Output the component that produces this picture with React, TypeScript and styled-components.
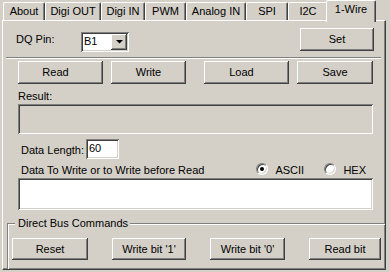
import styled, { createGlobalStyle } from "styled-components";

const GlobalStyle = createGlobalStyle`
  body {
    margin: 0;
    background: #d4d0c8;
    font-family: "Liberation Sans", Arial, sans-serif;
    font-size: 11px;
    line-height: 13px;
    color: #000;
  }
`;

const Window = styled.div`
  box-sizing: border-box;
  width: 390px;
  height: 272px;
  padding-left: 2px;
  background: #d4d0c8;
  overflow: hidden;
`;

const TabStrip = styled.div`
  display: flex;
  align-items: flex-end;
  height: 20px;
  padding-left: 1px;
  position: relative;
  z-index: 1;
`;

const Tab = styled.div<{ $w: number; $active?: boolean }>`
  box-sizing: border-box;
  width: ${(p) => (p.$active ? p.$w + 4 : p.$w)}px;
  height: ${(p) => (p.$active ? 22 : 18)}px;
  margin: ${(p) => (p.$active ? "0 -2px -2px -2px" : "0")};
  padding-top: 2px;
  display: flex;
  justify-content: center;
  background: #d4d0c8;
  border-top: 1px solid #fff;
  border-left: 1px solid #fff;
  border-right: 1px solid #404040;
  border-radius: 2px 2px 0 0;
  box-shadow: inset -1px 0 #808080;
  position: relative;
  z-index: ${(p) => (p.$active ? 2 : 1)};
  white-space: nowrap;
`;

const Panel = styled.div`
  box-sizing: border-box;
  width: 384px;
  height: 250px;
  border-top: 1px solid #fff;
  border-left: 1px solid #fff;
  border-right: 1px solid #404040;
  border-bottom: 1px solid #404040;
  box-shadow: inset -1px -1px #808080;
  display: flex;
  flex-direction: column;
  overflow: hidden;
`;

const Row = styled.div<{ $top: number }>`
  display: flex;
  align-items: flex-start;
  margin-top: ${(p) => p.$top}px;
`;

const Label = styled.span<{ $left: number; $top?: number; $w?: number }>`
  margin-left: ${(p) => p.$left}px;
  margin-top: ${(p) => p.$top ?? 0}px;
  ${(p) => (p.$w ? `width: ${p.$w}px;` : "")}
  white-space: nowrap;
`;

const Button = styled.button<{ $w: number; $h?: number; $left?: number; $shift?: number }>`
  box-sizing: border-box;
  width: ${(p) => p.$w}px;
  height: ${(p) => p.$h ?? 23}px;
  margin-left: ${(p) => p.$left ?? 0}px;
  padding: 0 ${(p) => (p.$shift ?? 0) * 2}px 0 0;
  border: none;
  background: #d4d0c8;
  font: inherit;
  color: #000;
  box-shadow: inset -1px -1px #404040, inset 1px 1px #fff,
    inset -2px -2px #808080;
  flex-shrink: 0;
`;

const SetButton = styled(Button)`
  margin-left: auto;
  margin-right: 11px;
`;

const Select = styled.div`
  box-sizing: border-box;
  width: 48px;
  height: 20px;
  margin-top: 4px;
  padding: 2px;
  display: flex;
  background: #fff;
  box-shadow: inset 1px 1px #808080, inset -1px -1px #fff,
    inset 2px 2px #404040, inset -2px -2px #d4d0c8;
`;

const SelectValue = styled.span`
  flex: 1;
  padding: 1px 0 0 1px;
`;

const DropButton = styled.div`
  box-sizing: border-box;
  width: 16px;
  display: flex;
  align-items: center;
  justify-content: center;
  background: #d4d0c8;
  box-shadow: inset -1px -1px #404040, inset 1px 1px #fff,
    inset -2px -2px #808080;
`;

const Separator = styled.div`
  margin: 5px 0 0 3px;
  width: 375px;
  height: 0;
  border-top: 1px solid #808080;
  border-bottom: 1px solid #fff;
`;

const Field = styled.div<{ $w: number; $h: number; $white?: boolean; $left: number }>`
  box-sizing: border-box;
  width: ${(p) => p.$w}px;
  height: ${(p) => p.$h}px;
  margin-left: ${(p) => p.$left}px;
  padding: 3px 0 0 3px;
  background: ${(p) => (p.$white ? "#fff" : "#d4d0c8")};
  box-shadow: inset 1px 1px #808080, inset -1px -1px #fff,
    inset 2px 2px #404040, inset -2px -2px #d4d0c8;
  flex-shrink: 0;
`;

const Block = styled.div<{ $top: number }>`
  margin-top: ${(p) => p.$top}px;
`;

const RadioGroup = styled.div`
  display: flex;
  margin-left: auto;
  margin-right: 19px;
`;

const RadioItem = styled.label<{ $w?: number }>`
  display: flex;
  align-items: flex-start;
  gap: 7px;
  ${(p) => (p.$w ? `width: ${p.$w}px;` : "")}
`;

const RadioCircle = styled.span<{ $checked?: boolean }>`
  box-sizing: border-box;
  width: 12px;
  height: 12px;
  margin-top: -1px;
  border-radius: 50%;
  background: #fff;
  border-top: 1px solid #808080;
  border-left: 1px solid #808080;
  border-right: 1px solid #fff;
  border-bottom: 1px solid #fff;
  box-shadow: inset 1px 1px #404040, inset -1px -1px #d4d0c8;
  display: flex;
  align-items: center;
  justify-content: center;
  &::after {
    content: "";
    width: 4px;
    height: 4px;
    border-radius: 50%;
    background: ${(p) => (p.$checked ? "#000" : "transparent")};
  }
`;

const Group = styled.div`
  flex: 1;
  margin: 13px -10px -10px 4px;
  padding: 14px 0 0 4px;
  border-top: 1px solid #808080;
  border-left: 1px solid #808080;
  box-shadow: inset 1px 1px #fff;
  position: relative;
  display: flex;
  align-items: flex-start;
  gap: 24px;
`;

const Legend = styled.span`
  position: absolute;
  top: -7px;
  left: 7px;
  padding: 0 2px 0 3px;
  background: #d4d0c8;
  white-space: nowrap;
`;

const tabs = [
  { name: "About", w: 42 },
  { name: "Digi OUT", w: 56 },
  { name: "Digi IN", w: 44 },
  { name: "PWM", w: 41 },
  { name: "Analog IN", w: 60 },
  { name: "SPI", w: 42 },
  { name: "I2C", w: 40 },
  { name: "1-Wire", w: 46, active: true },
];

export default function App() {
  return (
    <>
      <GlobalStyle />
      <Window>
        <TabStrip>
          {tabs.map((t) => (
            <Tab key={t.name} $w={t.w} $active={t.active}>
              {t.name}
            </Tab>
          ))}
        </TabStrip>
        <Panel>
          <Row $top={7}>
            <Label $left={13} $top={5} $w={65}>
              DQ Pin:
            </Label>
            <Select>
              <SelectValue>B1</SelectValue>
              <DropButton>
                <svg width="7" height="4" viewBox="0 0 7 4">
                  <polygon points="0,0 7,0 3.5,3.5" fill="#000" />
                </svg>
              </DropButton>
            </Select>
            <SetButton $w={74}>Set</SetButton>
          </Row>
          <Separator />
          <Row $top={2}>
            <Button $w={85} $left={15} $shift={5}>Read</Button>
            <Button $w={75} $left={8}>Write</Button>
            <Button $w={85} $left={18} $shift={5}>Load</Button>
            <Button $w={76} $left={8}>Save</Button>
          </Row>
          <Block $top={6}>
            <Label $left={15}>Result:</Label>
          </Block>
          <Row $top={1}>
            <Field $w={355} $h={30} $left={15} />
          </Row>
          <Row $top={5}>
            <Label $left={18} $top={5} $w={65}>
              Data Length:
            </Label>
            <Field $w={33} $h={20} $left={0} $white>
              60
            </Field>
          </Row>
          <Row $top={5}>
            <Label $left={18}>Data To Write or to Write before Read</Label>
            <RadioGroup>
              <RadioItem $w={68}>
                <RadioCircle $checked />
                ASCII
              </RadioItem>
              <RadioItem>
                <RadioCircle />
                HEX
              </RadioItem>
            </RadioGroup>
          </Row>
          <Row $top={1}>
            <Field $w={355} $h={32} $left={15} $white />
          </Row>
          <Group>
            <Legend>Direct Bus Commands</Legend>
            <Button $w={76} $h={22}>Reset</Button>
            <Button $w={74} $h={22}>Write bit '1'</Button>
            <Button $w={75} $h={22}>Write bit '0'</Button>
            <Button $w={72} $h={22}>Read bit</Button>
          </Group>
        </Panel>
      </Window>
    </>
  );
}
